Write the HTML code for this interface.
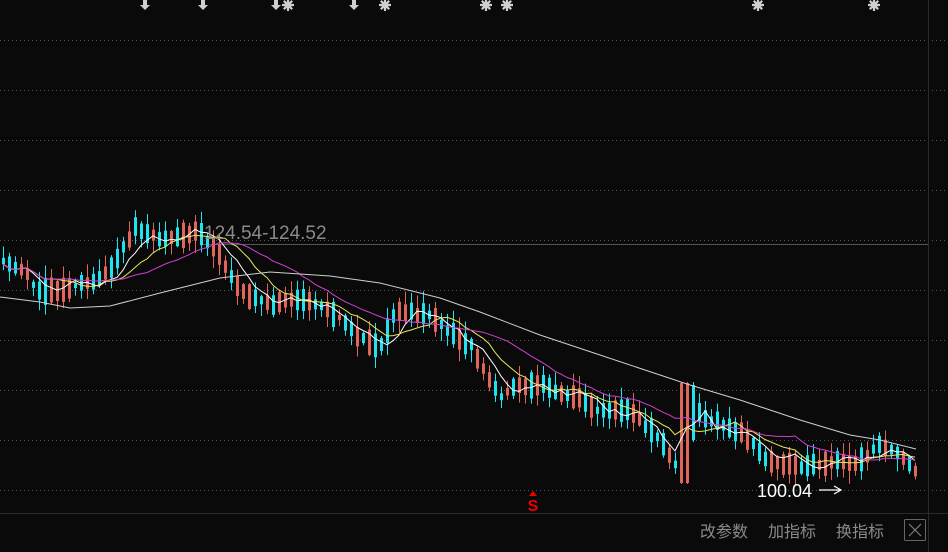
<!DOCTYPE html>
<html><head><meta charset="utf-8">
<style>
html,body{margin:0;padding:0;background:#0a0a0a;width:948px;height:552px;overflow:hidden}
svg{display:block}
text{font-family:"Liberation Sans","Noto Sans CJK SC",sans-serif}
</style></head><body>
<svg id="s" width="948" height="552" viewBox="0 0 948 552" xmlns="http://www.w3.org/2000/svg">
<rect width="948" height="552" fill="#0a0a0a"/>
<g id="grid"></g>
<line x1="928.5" y1="0" x2="928.5" y2="552" stroke="#2a2a2a" stroke-width="1"/>
<line x1="0" y1="513.5" x2="948" y2="513.5" stroke="#2a2a2a" stroke-width="1"/>
<line x1="200" y1="244.5" x2="928" y2="244.5" stroke="#555" stroke-width="1"/>
<g id="c"></g>
<g id="ma" fill="none" stroke-width="1"></g>
<text x="204" y="239" fill="#8a8a8a" font-size="19">124.54-124.52</text>
<text x="757" y="497" fill="#ffffff" font-size="18">100.04</text>
<path d="M819 490 H841 M834 486 L841 490 L834 494" stroke="#fff" fill="none" stroke-width="1.2"/>
<g id="top" fill="#cfcfcf"></g>
<text x="533" y="511" fill="#e00" font-size="16" font-weight="bold" text-anchor="middle">S</text>
<path d="M529 496 L533 491 L537 496 Z" fill="#e00"/>
<text x="700" y="537" fill="#8a8a8a" font-size="16">改参数</text>
<text x="768" y="537" fill="#8a8a8a" font-size="16">加指标</text>
<text x="836" y="537" fill="#8a8a8a" font-size="16">换指标</text>
<rect x="904.5" y="519.5" width="21" height="21" fill="none" stroke="#666" rx="1"/>
<path d="M909 524 L921 536 M921 524 L909 536" stroke="#888" stroke-width="1"/>
</svg>
<script>
var NS="http://www.w3.org/2000/svg";
function el(t,a,p){var e=document.createElementNS(NS,t);for(var k in a)e.setAttribute(k,a[k]);document.getElementById(p).appendChild(e);return e;}
for(var y=40;y<=490;y+=50){el('line',{x1:0,y1:y+.5,x2:948,y2:y+.5,stroke:'#555','stroke-dasharray':'1 3'},'grid');}
var kp=[[0,262],[20,268],[40,292],[60,290],[90,282],[110,270],[135,228],[150,236],[165,238],[200,232],[215,250],[240,290],[270,305],[300,298],[320,305],[345,322],[360,340],[380,345],[395,312],[430,315],[445,330],[470,345],[500,398],[515,385],[540,385],[570,395],[600,410],[630,410],[660,440],[680,472],[688,410],[710,420],[740,432],[770,462],[800,466],[830,462],[860,462],[880,444],[900,455],[916,470]];
function interp(x){for(var i=0;i<kp.length-1;i++){if(x<=kp[i+1][0]){var a=kp[i],b=kp[i+1];return a[1]+(b[1]-a[1])*(x-a[0])/(b[0]-a[0]);}}return kp[kp.length-1][1];}
var seed=11;function r(){seed=(seed*16807)%2147483647;return seed/2147483647;}
var closes=[],xs=[];
function candle(x,o,c,hi,lo){var col=c<o?'#e0665c':'#1fe3ee';
 el('line',{x1:x+.5,y1:hi,x2:x+.5,y2:lo,stroke:col},'c');
 el('rect',{x:x-1,y:Math.min(o,c),width:3,height:Math.max(1.5,Math.abs(o-c)),fill:col},'c');}
for(var x=3;x<=917;x+=6){
 var m=interp(x);var h=8+r()*16;var s=r()<.5?1:-1;var o=m-s*h/2+(r()-.5)*6;var c=m+s*h/2+(r()-.5)*6;
 var hi=Math.min(o,c)-r()*12-1;var lo=Math.max(o,c)+r()*12+1;
 if(x>=681&&x<=687){o=483;c=383;hi=382;lo=484;}
 if(x>=688&&x<=693){o=385;c=440;hi=382;lo=442;}
 candle(x,o,c,hi,lo);closes.push(c);xs.push(x);
}
function ma(n,col){var d='';for(var i=0;i<closes.length;i++){var s=0,k=0;for(var j=Math.max(0,i-n+1);j<=i;j++){s+=closes[j];k++;}var v=s/k;d+=(i?'L':'M')+xs[i]+' '+v.toFixed(1);}el('path',{d:d,stroke:col},'ma');}
ma(5,'#ffffff');ma(10,'#e8e85a');ma(20,'#d040d0');
var g=[[0,297],[40,302],[70,308],[110,306],[160,293],[220,278],[270,272],[330,276],[380,283],[440,298],[480,312],[540,335],[600,355],[660,375],[690,385],[740,400],[800,420],[850,435],[880,440],[916,449]];
el('path',{d:g.map(function(p,i){return (i?'L':'M')+p[0]+' '+p[1];}).join(''),stroke:'#cfcfcf'},'ma');
var arrows=[145,203,276,354],stars=[288,385,486,507,758,874];
arrows.forEach(function(x){el('path',{d:'M'+(x-2)+' 0 h4 v5 h3 l-5 5 l-5 -5 h3 z',fill:'#cfcfcf'},'top');});
stars.forEach(function(x){var s='';for(var a=0;a<8;a++){var t=a*Math.PI/4;s+='M'+x+' 5 L'+(x+6*Math.cos(t)).toFixed(1)+' '+(5+6*Math.sin(t)).toFixed(1);}
 el('path',{d:s,stroke:'#cfcfcf','stroke-width':'2.2'},'top');el('circle',{cx:x,cy:5,r:3.5},'top');});
</script>
</body></html>
